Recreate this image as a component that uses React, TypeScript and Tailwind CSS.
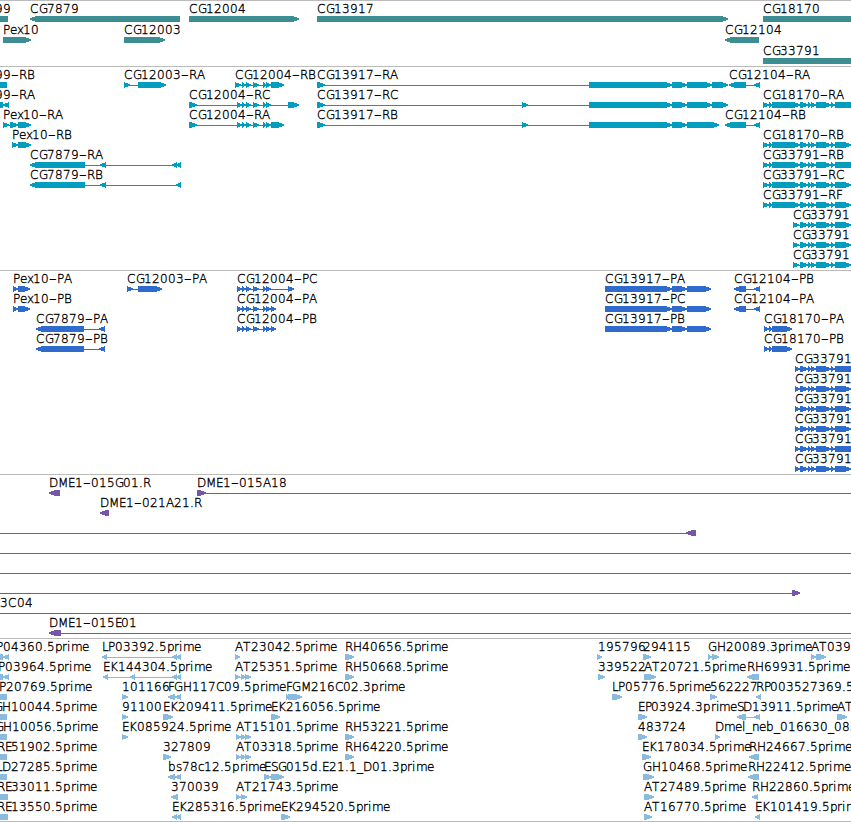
type Strand = "+" | "-";
type Span = [number, number];

interface Feature {
  row: number;
  label?: string;
  x: number;
  strand?: Strand;
  exons?: Span[];
  // intron line, when it runs past the drawn exons
  line?: Span;
}

interface TrackProps {
  name: string;
  color: string;
  height: number;
  rowHeight?: number;
  features: Feature[];
  last?: boolean;
}

const WIDTH = 851;

// glyph advances at the 12px label size
const ADVANCE: Record<string, number> = {
  A: 8.2, B: 7, C: 8.5, D: 9, E: 6.7, F: 6.1, G: 8.7, H: 9, K: 7.8, L: 6, M: 10,
  P: 6.6, R: 7.5, S: 6.8, T: 7.5, b: 7.6, c: 6.3, d: 7.6, e: 7, i: 3.5, l: 3.5,
  m: 11, n: 7.5, p: 7.6, r: 5, s: 6.3, x: 6.8, ".": 4, _: 6, "-": 8,
};

function glyphPositions(label: string, x: number) {
  let pos = x;
  return label.split("").map((ch) => {
    const at = Math.round(pos);
    pos += ADVANCE[ch] ?? 8;
    return at;
  });
}

function f(row: number, label: string, x: number, strand: Strand, ...exons: Span[]): Feature {
  return { row, label, x, strand, exons };
}

const genes: Feature[] = [
  f(0, "99", -5, "-", [-10, 8]),
  f(0, "CG7879", 30, "-", [30, 180]),
  f(0, "CG12004", 189, "+", [189, 299]),
  f(0, "CG13917", 317, "+", [317, 728]),
  f(0, "CG18170", 763, "+", [763, 870]),
  f(1, "Pex10", 3, "+", [3, 31]),
  f(1, "CG12003", 124, "+", [124, 165]),
  f(1, "CG12104", 725, "-", [725, 759]),
  f(2, "CG33791", 763, "+", [763, 870]),
];

const cg12004: Span[] = [[242, 246], [246, 251], [253, 259], [263, 267], [266, 271]];
const cg13917: Span[] = [[589, 672], [672, 687]];
const cg33791: Span[] = [[800, 808], [808, 812], [811, 816], [816, 831], [831, 835]];
const cg18170: Span[] = [[763, 769], [769, 772], [772, 800], ...cg33791];

const transcripts: Feature[] = [
  f(0, "99-RB", -5, "-", [-10, 7]),
  f(0, "CG12003-RA", 124, "+", [124, 130], [138, 166]),
  f(0, "CG12004-RB", 235, "+", [235, 241], ...cg12004, [271, 284]),
  f(0, "CG13917-RA", 317, "+", [317, 325], ...cg13917, [687, 712], [712, 728]),
  f(0, "CG12104-RA", 729, "-", [729, 746], [754, 760]),
  f(1, "99-RA", -5, "-", [-10, 3], [3, 9]),
  f(1, "CG12004-RC", 189, "+", [189, 197], [237, 242], ...cg12004, [288, 299]),
  f(1, "CG13917-RC", 317, "+", [317, 325], [522, 528], ...cg13917, [687, 712], [712, 728]),
  f(1, "CG18170-RA", 763, "+", ...cg18170, [835, 870]),
  f(2, "Pex10-RA", 3, "+", [3, 9], [10, 18], [18, 31]),
  f(2, "CG12004-RA", 189, "+", [189, 197], [237, 242], ...cg12004, [271, 284]),
  f(2, "CG13917-RB", 317, "+", [317, 325], [522, 528], ...cg13917, [687, 719]),
  f(2, "CG12104-RB", 725, "-", [725, 746], [754, 760]),
  f(3, "Pex10-RB", 12, "+", [12, 18], [18, 31]),
  f(3, "CG18170-RB", 763, "+", ...cg18170, [835, 851]),
  f(4, "CG7879-RA", 30, "-", [30, 85], [100, 106], [172, 177], [176, 181]),
  f(4, "CG33791-RB", 763, "+", ...cg18170, [835, 870]),
  f(5, "CG7879-RB", 30, "-", [30, 85], [100, 106], [176, 181]),
  f(5, "CG33791-RC", 763, "+", ...cg18170, [835, 851]),
  f(6, "CG33791-RF", 763, "+", ...cg18170, [835, 851]),
  ...[7, 8, 9].map((row) => f(row, "CG33791", 793, "+", [793, 799], ...cg33791, [835, 851])),
];

const proteins: Feature[] = [
  f(0, "Pex10-PA", 13, "+", [13, 18], [18, 30]),
  f(0, "CG12003-PA", 127, "+", [127, 133], [138, 162]),
  f(0, "CG12004-PC", 237, "+", [237, 242], ...cg12004, [288, 294]),
  f(0, "CG13917-PA", 605, "+", [605, 672], [672, 687], [687, 711]),
  f(0, "CG12104-PB", 734, "-", [734, 746], [754, 760]),
  f(1, "Pex10-PB", 13, "+", [13, 18], [18, 30]),
  f(1, "CG12004-PA", 237, "+", [237, 242], ...cg12004, [271, 276]),
  f(1, "CG13917-PC", 605, "+", [605, 672], [672, 687], [687, 711]),
  f(1, "CG12104-PA", 734, "-", [734, 746], [754, 760]),
  f(2, "CG7879-PA", 36, "-", [36, 84], [99, 105]),
  f(2, "CG12004-PB", 237, "+", [237, 242], ...cg12004, [271, 276]),
  f(2, "CG13917-PB", 605, "+", [605, 672], [672, 687], [687, 711]),
  f(2, "CG18170-PA", 764, "+", [764, 769], [769, 772], [772, 792]),
  f(3, "CG7879-PB", 36, "-", [36, 84], [99, 105]),
  f(3, "CG18170-PB", 764, "+", [764, 769], [769, 772], [772, 792]),
  ...[4, 5, 6, 7, 8, 9].map((row) => f(row, "CG33791", 795, "+", [795, 800], ...cg33791, [835, row === 4 || row === 8 ? 870 : 851])),
];

const clones: Feature[] = [
  f(0, "DME1-015G01.R", 49, "-", [49, 60]),
  { row: 0, label: "DME1-015A18", x: 197, strand: "+", exons: [[197, 206]], line: [197, WIDTH] },
  f(1, "DME1-021A21.R", 100, "-", [100, 109]),
  { row: 2, x: 0, strand: "-", exons: [[686, 696]], line: [0, 696] },
  { row: 3, x: 0, line: [0, WIDTH] },
  { row: 4, x: 0, line: [0, WIDTH] },
  { row: 5, x: 0, strand: "+", exons: [[792, 800]], line: [0, 800] },
  { row: 6, label: "3C04", x: 0, line: [0, WIDTH] },
  { row: 7, label: "DME1-015E01", x: 49, strand: "-", exons: [[49, 61]], line: [49, WIDTH] },
];

const ests: Feature[] = [
  f(0, "P04360.5prime", -4, "-", [-10, 3], [3, 9]),
  f(1, "P03964.5prime", -2, "-", [-10, 3], [3, 9]),
  f(2, "P20769.5prime", -1, "-", [-10, 7]),
  f(3, "GH10044.5prime", -6.5, "-", [-10, 7]),
  f(4, "GH10056.5prime", -5.5, "-", [-10, 7]),
  f(5, "RE51902.5prime", -3, "-", [-10, 7]),
  f(6, "LD27285.5prime", -4, "-", [-10, 7]),
  f(7, "RE33011.5prime", -3, "-", [-10, 8]),
  f(8, "RE13550.5prime", -3, "-", [-10, 8]),

  f(0, "LP03392.5prime", 102, "-", [102, 107], [172, 177], [176, 181]),
  f(1, "EK144304.5prime", 103, "-", [103, 108], [130, 135], [172, 177], [176, 181]),
  f(2, "101166", 122, "+", [122, 128]),
  f(2, "FGH117C09.5prime", 168, "-", [168, 175], [175, 181]),
  f(3, "91100", 122, "+", [122, 128]),
  f(3, "EK209411.5prime", 163, "+", [163, 173]),
  f(4, "EK085924.5prime", 122, "+", [122, 128]),
  f(5, "327809", 163, "+", [163, 171]),
  f(6, "bs78c12.5prime", 168, "-", [168, 175], [175, 181]),
  f(7, "370039", 171, "-", [171, 178]),
  f(8, "EK285316.5prime", 172, "-", [172, 177], [176, 181]),

  f(0, "AT23042.5prime", 235, "+", [235, 240]),
  f(1, "AT25351.5prime", 235, "+", [235, 240], [241, 246], [245, 251]),
  f(2, "FGM216C02.3prime", 286, "+", [286, 289], [288, 302]),
  f(3, "EK216056.5prime", 271, "+", [271, 280]),
  f(4, "AT15101.5prime", 236, "+", [236, 241], [241, 246], [245, 251]),
  f(5, "AT03318.5prime", 236, "+", [236, 241], [241, 246], [245, 251]),
  f(6, "ESG015d.E21.1_D01.3prime", 264, "+", [264, 271], [271, 284]),
  f(7, "AT21743.5prime", 236, "+", [236, 241], [241, 247]),
  f(8, "EK294520.5prime", 281, "+", [281, 290]),

  f(0, "RH40656.5prime", 345, "+", [345, 354]),
  f(1, "RH50668.5prime", 345, "+", [345, 354]),
  f(4, "RH53221.5prime", 345, "+", [345, 354]),
  f(5, "RH64220.5prime", 345, "+", [345, 354]),

  f(0, "195796", 597.5, "+", [597, 602]),
  f(0, "294115", 643, "+", [643, 651]),
  f(1, "339522", 598, "+", [598, 605]),
  f(1, "AT20721.5prime", 644, "+", [644, 656]),
  f(2, "LP05776.5prime", 612, "+", [612, 622]),
  f(3, "EP03924.3prime", 638, "+", [638, 647]),
  f(4, "483724", 638, "+", [638, 647]),
  f(5, "EK178034.5prime", 642, "+", [642, 651]),
  f(6, "GH10468.5prime", 643, "+", [643, 654]),
  f(7, "AT27489.5prime", 644, "+", [644, 654]),
  f(8, "AT16770.5prime", 644, "+", [644, 652]),

  f(0, "GH20089.3prime", 708, "+", [708, 712], [712, 719]),
  f(0, "AT039", 811, "+", [811, 816], [816, 826]),
  f(1, "RH69931.5prime", 747, "-", [747, 759]),
  f(2, "562227", 710, "+", [710, 717]),
  f(2, "RP003527369.5", 756, "-", [756, 761]),
  f(3, "SD13911.5prime", 736.5, "-", [737, 746], [754, 760]),
  f(3, "AT", 837, "+", [837, 847]),
  f(4, "Dmel_neb_016630_083", 715, "+", [715, 720]),
  f(5, "RH24667.5prime", 749, "-", [749, 759]),
  f(6, "RH22412.5prime", 748, "-", [748, 759]),
  f(7, "RH22860.5prime", 752, "-", [752, 758]),
  f(8, "EK101419.5prim", 755, "-", [755, 760]),
];

function exonPoints([start, end]: Span, strand: Strand, y: number) {
  const head = Math.min(end - start, 6);
  if (strand === "+") {
    const neck = end - head;
    return `${start},${y} ${neck},${y} ${end},${y + 2.5} ${end},${y + 3.5} ${neck},${y + 6} ${start},${y + 6}`;
  }
  const neck = start + head;
  return `${end},${y} ${neck},${y} ${start},${y + 2.5} ${start},${y + 3.5} ${neck},${y + 6} ${end},${y + 6}`;
}

// The hyphen is set larger and thinner so that it fills its wide advance.
function Label({ text, x, y }: { text: string; x: number; y: number }) {
  const xs = glyphPositions(text, x);
  const dash = text.indexOf("-");
  const className = "fill-black stroke-black font-extralight text-[12px] [stroke-width:0.35px]";

  if (dash < 0) {
    return (
      <text x={xs.join(" ")} y={y} className={className}>
        {text}
      </text>
    );
  }
  return (
    <text className={className}>
      <tspan x={xs.slice(0, dash).join(" ")} y={y}>{text.slice(0, dash)}</tspan>
      <tspan x={xs[dash] - 0.5} y={y + 3} className="text-[24px] [stroke-width:0px]">-</tspan>
      <tspan x={xs.slice(dash + 1).join(" ")} y={y}>{text.slice(dash + 1)}</tspan>
    </text>
  );
}

function FeatureGlyph({ feature, rowHeight }: { feature: Feature; rowHeight: number }) {
  const { row, label, x, strand = "+", exons = [] } = feature;
  const top = row * rowHeight;
  const line = feature.line ?? (exons.length > 1 ? [exons[0][0], exons[exons.length - 1][1]] : null);

  return (
    <g>
      {line && <rect x={line[0]} y={top + 19} width={line[1] - line[0]} height={1} shapeRendering="crispEdges" />}
      {exons.map((exon, i) => (
        <polygon key={i} points={exonPoints(exon, strand, top + 16)} shapeRendering="crispEdges" />
      ))}
      {label && <Label text={label} x={x} y={top + 13} />}
    </g>
  );
}

function Track({ name, color, height, rowHeight = 20, features, last }: TrackProps) {
  const inner = height - (last ? 2 : 1);
  return (
    <section aria-label={name} className={last ? "border-y border-[#bbbbbb]" : "border-t border-[#bbbbbb]"}>
      <svg className="block" width={WIDTH} height={inner} viewBox={`0 1 ${WIDTH} ${inner}`} fill={color}>
        {features.map((feature, i) => (
          <FeatureGlyph key={i} feature={feature} rowHeight={rowHeight} />
        ))}
      </svg>
    </section>
  );
}

export default function App() {
  return (
    <main className="flex w-[851px] flex-col overflow-hidden bg-white font-['DejaVu_Sans',sans-serif]">
      <Track name="Genes" color="#3d8e93" height={66} rowHeight={21} features={genes} />
      <Track name="Transcripts" color="#009dbf" height={204} features={transcripts} />
      <Track name="Proteins" color="#2f6bcc" height={204} features={proteins} />
      <Track name="Clones" color="#7755aa" height={164} features={clones} />
      <Track name="ESTs" color="#88bbdd" height={184} features={ests} last />
    </main>
  );
}
